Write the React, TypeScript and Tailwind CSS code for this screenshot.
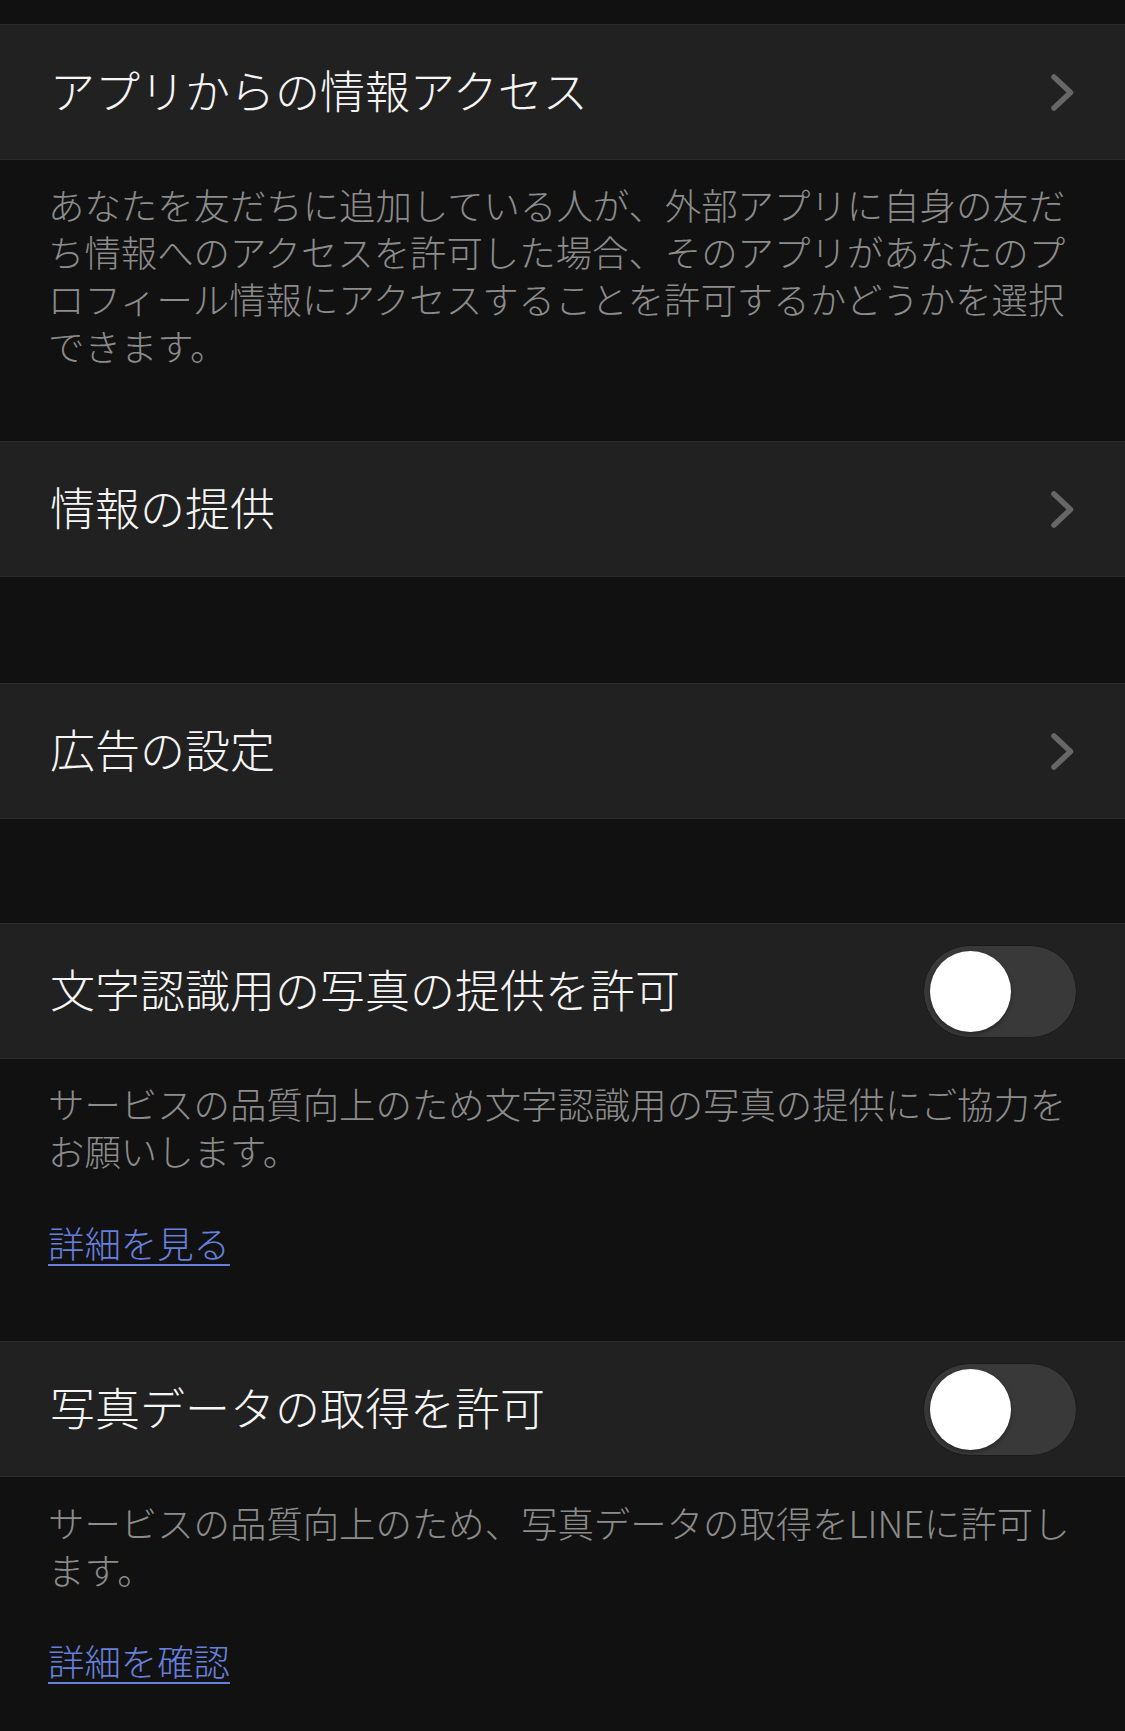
import React, { useState } from "react";

function Chevron() {
  return (
    <svg width="25" height="39" viewBox="0 0 25 39" fill="none">
      <path
        d="M4 4 L20.5 19.5 L4 35"
        stroke="#676767"
        strokeWidth="5.5"
        strokeLinecap="round"
        strokeLinejoin="round"
      />
    </svg>
  );
}

function NavRow({ title }: { title: string }) {
  return (
    <div className="flex h-[136px] items-center justify-between border-y border-[#2a2a2a] bg-[#212121] pl-[50px] pr-[50px]">
      <span className="pb-[6px] text-[45px] font-light leading-none text-[#f5f5f5]">{title}</span>
      <Chevron />
    </div>
  );
}

function ToggleRow({ title }: { title: string }) {
  const [on, setOn] = useState(false);
  return (
    <div className="flex h-[136px] items-center justify-between border-y border-[#2a2a2a] bg-[#212121] pl-[50px] pr-[48px]">
      <span className="pb-[6px] text-[45px] font-light leading-none text-[#f5f5f5]">{title}</span>
      <button
        onClick={() => setOn(!on)}
        className={`flex h-[93px] w-[154px] items-center rounded-full border border-[#1a1a1a] px-[6px] ${
          on ? "justify-end bg-[#06c755]" : "justify-start bg-[#393939]"
        }`}
      >
        <span className="h-[81px] w-[81px] rounded-full bg-white shadow-[0_2px_4px_rgba(0,0,0,0.35)]" />
      </button>
    </div>
  );
}

export default function App() {
  return (
    <div className="min-h-[1731px] bg-[#111111] pt-[24px] font-['Noto_Sans_CJK_JP',sans-serif]">
      <NavRow title="アプリからの情報アクセス" />
      <div className="px-[48px] pb-[72px] pt-[21px] text-[36.4px] font-light leading-[47px] text-[#8c8c8c]">
        あなたを友だちに追加している人が、外部アプリに自身の友だち情報へのアクセスを許可した場合、そのアプリがあなたのプロフィール情報にアクセスすることを許可するかどうかを選択できます。
      </div>

      <NavRow title="情報の提供" />
      <div className="h-[106px]" />
      <NavRow title="広告の設定" />
      <div className="h-[104px]" />

      <ToggleRow title="文字認識用の写真の提供を許可" />
      <div className="px-[48px] pb-[75px] pt-[21px] text-[36.4px] font-light leading-[47px] text-[#8c8c8c]">
        <p>サービスの品質向上のため文字認識用の写真の提供にご協力をお願いします。</p>
        <a href="#" className="mt-[45px] inline-block text-[#6680dc] underline decoration-2 underline-offset-[6px]">
          詳細を見る
        </a>
      </div>

      <ToggleRow title="写真データの取得を許可" />
      <div className="px-[48px] pb-[40px] pt-[22px] text-[36.4px] font-light leading-[47px] text-[#8c8c8c]">
        <p>サービスの品質向上のため、写真データの取得をLINEに許可します。</p>
        <a href="#" className="mt-[44px] inline-block text-[#6680dc] underline decoration-2 underline-offset-[6px]">
          詳細を確認
        </a>
      </div>
    </div>
  );
}
